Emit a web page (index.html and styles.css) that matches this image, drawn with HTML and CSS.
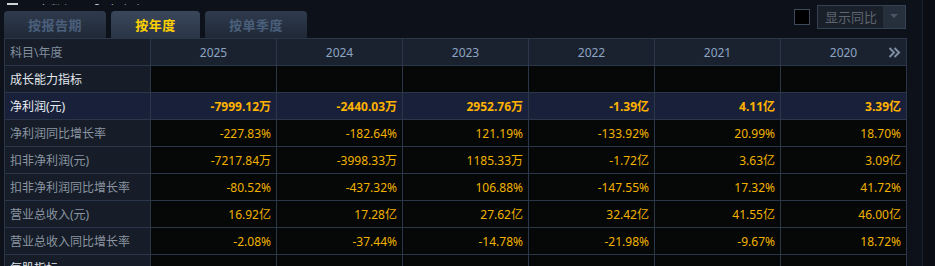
FILE: index.html
```html
<!DOCTYPE html>
<html lang="zh">
<head>
<meta charset="utf-8">
<title>财务指标</title>
<link rel="stylesheet" href="styles.css">
</head>
<body>
<div class="page">
  <div class="topstrip">
    <span class="tool"><span class="sq"></span>导出数据</span>
    <span class="tool"><span class="dot"></span>自定义</span>
  </div>
  <div class="bar">
    <div class="tabs">
      <div class="tab">按报告期</div>
      <div class="tab active">按年度</div>
      <div class="tab">按单季度</div>
    </div>
    <div class="opts">
      <span class="check"></span>
      <div class="select">
        <span class="sel-text">显示同比</span>
        <span class="sel-arrow"><svg width="8" height="5" viewBox="0 0 8 5"><path d="M0 0h8L4 4z" fill="#4a5566"/></svg></span>
      </div>
    </div>
  </div>
  <table class="grid">
    <colgroup>
      <col class="c-label"><col class="c-val"><col class="c-val"><col class="c-val"><col class="c-val"><col class="c-val"><col class="c-val">
    </colgroup>
    <thead>
      <tr class="head">
        <th class="lbl">科目\年度</th>
        <th>2025</th><th>2024</th><th>2023</th><th>2022</th><th>2021</th>
        <th class="last">2020<svg class="more" width="13" height="11" viewBox="0 0 13 11"><path d="M1.5 1l4.5 4.5-4.5 4.5M6.5 1l4.5 4.5-4.5 4.5" fill="none" stroke="#7d8da2" stroke-width="2"/></svg></th>
      </tr>
    </thead>
    <tbody>
      <tr class="cat"><td class="lbl">成长能力指标</td><td></td><td></td><td></td><td></td><td></td><td></td></tr>
      <tr class="hl"><td class="lbl">净利润(元)</td><td>-7999.12万</td><td>-2440.03万</td><td>2952.76万</td><td>-1.39亿</td><td>4.11亿</td><td>3.39亿</td></tr>
      <tr><td class="lbl">净利润同比增长率</td><td>-227.83%</td><td>-182.64%</td><td>121.19%</td><td>-133.92%</td><td>20.99%</td><td>18.70%</td></tr>
      <tr><td class="lbl">扣非净利润(元)</td><td>-7217.84万</td><td>-3998.33万</td><td>1185.33万</td><td>-1.72亿</td><td>3.63亿</td><td>3.09亿</td></tr>
      <tr><td class="lbl">扣非净利润同比增长率</td><td>-80.52%</td><td>-437.32%</td><td>106.88%</td><td>-147.55%</td><td>17.32%</td><td>41.72%</td></tr>
      <tr><td class="lbl">营业总收入(元)</td><td>16.92亿</td><td>17.28亿</td><td>27.62亿</td><td>32.42亿</td><td>41.55亿</td><td>46.00亿</td></tr>
      <tr><td class="lbl">营业总收入同比增长率</td><td>-2.08%</td><td>-37.44%</td><td>-14.78%</td><td>-21.98%</td><td>-9.67%</td><td>18.72%</td></tr>
      <tr class="cat"><td class="lbl">每股指标</td><td></td><td></td><td></td><td></td><td></td><td></td></tr>
    </tbody>
  </table>
</div>
</body>
</html>
```
FILE: styles.css
```css
* { box-sizing: border-box; }
html, body {
  margin: 0;
  padding: 0;
  background: #0a0d13;
  overflow: hidden;
}
body {
  font-family: "Noto Sans", "Noto Sans CJK SC", sans-serif;
  font-size: 12px;
}
.page {
  width: 923px;
  height: 266px;
  background: #0d111a;
  border-right: 1px solid #1c222c;
  overflow: hidden;
}
.topstrip {
  height: 5px;
  overflow: hidden;
  display: flex;
  align-items: flex-end;
  gap: 18px;
  padding-left: 7px;
}
.tool {
  display: flex;
  align-items: center;
  gap: 6px;
  color: #a9afb8;
  font-size: 13px;
  line-height: 16px;
  margin-bottom: -13px;
  flex: none;
}
.sq { width: 11px; height: 9px; background: #cfd3d8; display: inline-block; margin-top: -6px; }
.dot { width: 6px; height: 6px; border-radius: 50%; background: #cfd3d8; display: inline-block; margin-top: -6px; }
.bar {
  display: flex;
  justify-content: space-between;
  align-items: flex-end;
  margin-top: 6px;
  margin-left: 4px;
  width: 902px;
  height: 27px;
}
.tabs { display: flex; gap: 5px; height: 27px; }
.tab {
  width: 102px;
  height: 27px;
  border-radius: 4px 4px 0 0;
  background: linear-gradient(#2f3b4d, #1f2836);
  color: #4a5f7b;
  font-weight: bold;
  font-size: 13px;
  display: flex;
  align-items: center;
  justify-content: center;
  letter-spacing: 0.5px;
}
.tab.active {
  width: 89px;
  background: linear-gradient(#3a475b, #2a3546);
  color: #ffd000;
}
.opts {
  display: flex;
  align-items: center;
  gap: 7px;
  align-self: stretch;
  margin-top: -7px;
  height: 25px;
}
.check {
  width: 16px;
  height: 16px;
  background: #000;
  border: 1px solid #3c4a5c;
}
.select {
  display: flex;
  width: 89px;
  height: 24px;
  border: 1px solid #354254;
  background: #1a2029;
}
.sel-text {
  flex: 1;
  color: #5c6570;
  font-size: 13px;
  display: flex;
  align-items: center;
  padding-left: 7px;
}
.sel-arrow {
  width: 22px;
  background: #262f3c;
  display: flex;
  align-items: center;
  justify-content: center;
}
.grid {
  margin-left: 4px;
  border-collapse: collapse;
  table-layout: fixed;
  width: 902px;
}
.c-label { width: 146px; }
.c-val { width: 126px; }
.grid th, .grid td {
  border: 1px solid #2b3748;
  height: 27px;
  padding: 0 5px;
  white-space: nowrap;
  overflow: hidden;
}
.grid td {
  background: #050807;
  color: #f2b200;
  text-align: right;
}
.head th {
  background: #1a2230;
  color: #8ea4c2;
  font-weight: normal;
  text-align: center;
  position: relative;
}
.head th.lbl { color: #7f8c9c; }
.more { position: absolute; right: 5px; top: 8px; }
.grid .lbl {
  text-align: left;
  background: #161d28;
  color: #8b95a1;
  padding-left: 5px;
  font-size: 12px;
}
.cat .lbl { color: #e3e8ee; }
.hl td {
  background: #182139;
  font-weight: bold;
  color: #ffb200;
}
.hl td.lbl {
  background: #182139;
  color: #e8edf3;
  font-weight: normal;
}
```
